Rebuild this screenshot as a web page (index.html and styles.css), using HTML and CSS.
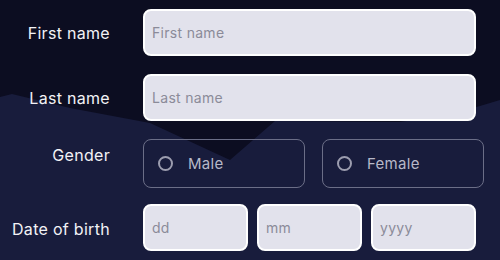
FILE: index.html
```html
<!DOCTYPE html>
<html lang="en">
<head>
  <meta charset="UTF-8">
  <meta name="viewport" content="width=device-width, initial-scale=1.0">
  <title>Sign up</title>
  <link rel="stylesheet" href="styles.css">
</head>
<body>
  <!-- background hills -->
  <svg class="hills" viewBox="0 0 500 260" preserveAspectRatio="none">
    <polygon points="0,97 12,94 70,108 150,123 230,160 275,121 400,122 450,114 480,106 500,100 500,260 0,260" fill="#181c3c"/>
  </svg>

  <form class="form">
    <label class="label" for="first">First name</label>
    <input class="field" id="first" type="text" placeholder="First name">

    <label class="label" for="last">Last name</label>
    <input class="field" id="last" type="text" placeholder="Last name">

    <div class="label label-top">Gender</div>
    <div class="genders">
      <label class="option"><span class="dot"></span>Male</label>
      <label class="option"><span class="dot"></span>Female</label>
    </div>

    <label class="label" for="dd">Date of birth</label>
    <div class="dob">
      <input class="field" id="dd" type="text" placeholder="dd">
      <input class="field" type="text" placeholder="mm">
      <input class="field" type="text" placeholder="yyyy">
    </div>
  </form>
</body>
</html>
```

FILE: styles.css
```css
body {
  margin: 0;
  width: 500px;
  height: 260px;
  overflow: hidden;
  background-color: #0c0d21;
  font-family: "Inter", "Liberation Sans", sans-serif;
  color: #fff;
  position: relative;
}
.hills {
  position: absolute;
  left: 0;
  top: 0;
  width: 500px;
  height: 260px;
}
.form {
  position: relative;
  display: grid;
  grid-template-columns: 110px 333px;
  column-gap: 33px;
  row-gap: 18px;
  padding-top: 9px;
  align-items: center;
}
.label {
  text-align: right;
  font-size: 16px;
  letter-spacing: 0.3px;
  color: #f2f2f6;
  white-space: nowrap;
}
.label-top {
  align-self: start;
  padding-top: 6px;
}
.field {
  box-sizing: border-box;
  width: 100%;
  height: 47px;
  margin: 0;
  padding: 0 7px;
  border: 2px solid #fff;
  border-radius: 8px;
  background-color: #e2e2ec;
  font-family: inherit;
  font-size: 14px;
  letter-spacing: 0.3px;
  color: #333;
  outline: none;
}
.field::placeholder {
  color: #8b8b99;
}
.genders {
  display: grid;
  grid-template-columns: 162px 162px;
  gap: 17px;
}
.option {
  box-sizing: border-box;
  height: 49px;
  display: flex;
  align-items: center;
  gap: 15px;
  padding-left: 14px;
  border: 1px solid #6b6e87;
  border-radius: 8px;
  font-size: 15px;
  letter-spacing: 0.3px;
  color: #b7b8c8;
}
.dot {
  box-sizing: border-box;
  width: 15px;
  height: 15px;
  border: 2px solid #9c9daf;
  border-radius: 50%;
}
.dob {
  display: grid;
  grid-template-columns: repeat(3, 1fr);
  gap: 9px;
  margin-top: -2px;
}
```
